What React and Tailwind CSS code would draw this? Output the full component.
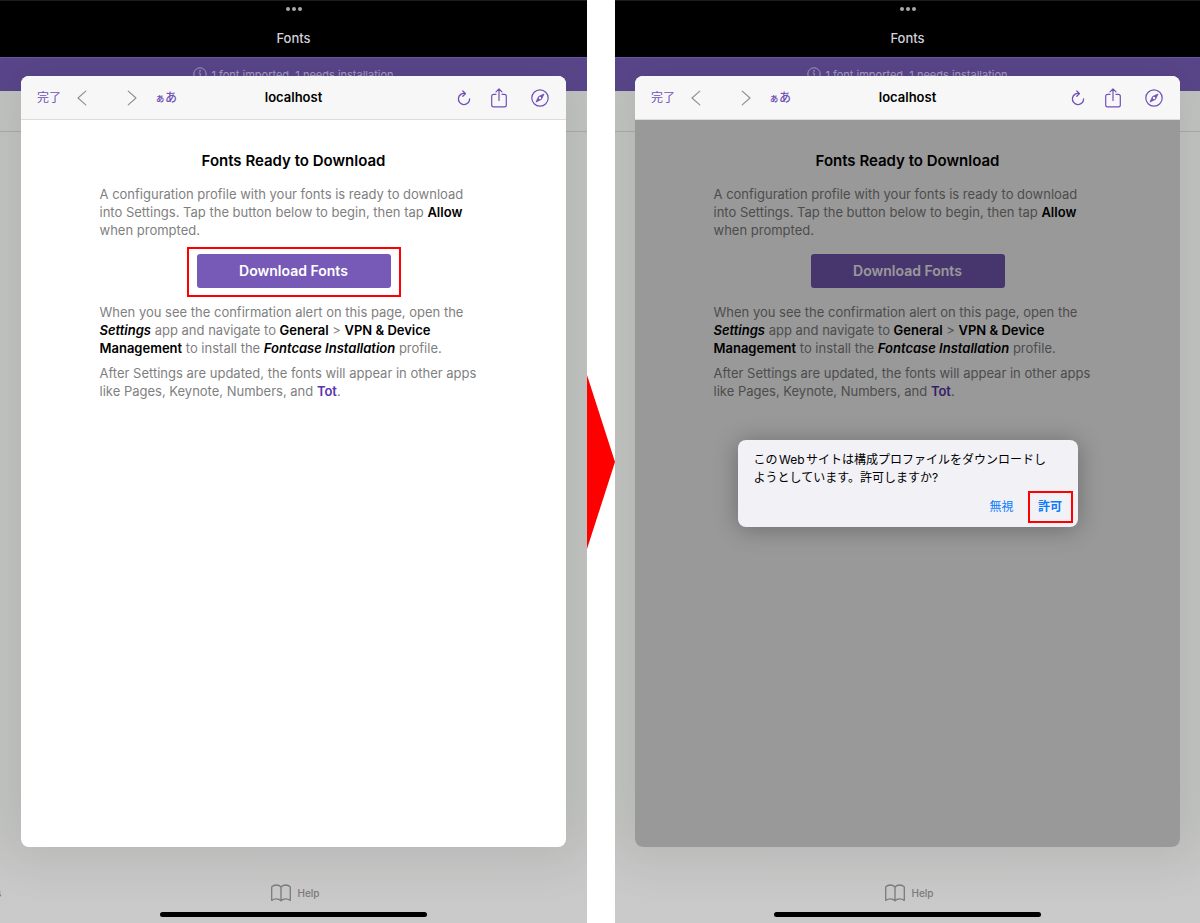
import React from 'react';
import clsx from 'clsx';

function ReloadIcon() {
  return (
    <svg className="w-[14px] h-4" viewBox="0 0 14 16" fill="none" stroke="currentColor" strokeWidth="1.3" strokeLinecap="round" strokeLinejoin="round">
      <path d="M8.2 3.5A5.6 5.6 0 1 0 12.6 9" />
      <path d="M5.8 1 8.4 3.6 5.8 6.2" />
    </svg>
  );
}

function ShareIcon() {
  return (
    <svg className="w-4 h-5" viewBox="0 0 16 20" fill="none" stroke="currentColor" strokeWidth="1.2" strokeLinecap="round" strokeLinejoin="round">
      <path d="M5 6.3H2.6A1.9 1.9 0 0 0 .7 8.2v8.7a1.9 1.9 0 0 0 1.9 1.9h10.8a1.9 1.9 0 0 0 1.9-1.9V8.2a1.9 1.9 0 0 0-1.9-1.9H11" />
      <path d="M8 12.4V1M5 3.9 8 .9l3 3" />
    </svg>
  );
}

function CompassIcon() {
  return (
    <svg className="size-[18px]" viewBox="0 0 18 18" fill="none" stroke="currentColor" strokeWidth="1.2" strokeLinejoin="round">
      <circle cx="9" cy="9" r="8.2" />
      <path d="M13 5 10.4 10.4 5 13 7.6 7.6Z" fill="currentColor" strokeWidth="0.8" />
      <circle cx="9" cy="9" r="1.2" fill="#f7f7f7" stroke="none" />
    </svg>
  );
}

function Chevron({ flip }) {
  return (
    <svg className="w-[10px] h-4" viewBox="0 0 10 16" fill="none" stroke="currentColor" strokeWidth="1.1" strokeLinecap="round" strokeLinejoin="round">
      <path d={flip ? 'M1.2 1.2 9 8l-7.8 6.8' : 'M8.8 1.2 1 8l7.8 6.8'} />
    </svg>
  );
}

function BookIcon() {
  return (
    <svg className="w-5 h-[18px]" viewBox="0 0 20 18" fill="none" stroke="currentColor" strokeWidth="1.3" strokeLinecap="round" strokeLinejoin="round">
      <path d="M10 3.2C9 1.6 7.4 1 5.6 1 3.6 1 1.9 1.6.7 2.9v13.5c1.3-1 2.9-1.5 4.7-1.5 1.9 0 3.5.6 4.6 2 1.1-1.4 2.7-2 4.6-2 1.8 0 3.4.5 4.7 1.500V2.900C18.100 1.600 16.400 1 14.400 1 12.600 1 11 1.600 10 3.200Zm0 0v13.700" />
    </svg>
  );
}

function Toolbar() {
  return (
    <div className="grid grid-cols-[1fr_auto_1fr] items-center h-11 shrink-0 px-4 bg-[#f7f7f7] border-b border-[#dcdcdc] text-[#7050b8]">
      <div className="flex items-center">
        <button className="text-xs">完了</button>
        <button aria-label="Back" className="ml-4 text-[#8e8e93]"><Chevron /></button>
        <button aria-label="Forward" className="ml-10 text-[#8e8e93]"><Chevron flip /></button>
        <button className="ml-[18px] flex items-baseline font-medium">
          <span className="text-[10px]">ぁ</span>
          <span className="text-xs">あ</span>
        </button>
      </div>
      <div className="text-[13px] font-semibold text-black">localhost</div>
      <div className="flex items-center justify-end pr-px">
        <button aria-label="Reload"><ReloadIcon /></button>
        <button aria-label="Share" className="ml-5"><ShareIcon /></button>
        <button aria-label="Open in Safari" className="ml-6"><CompassIcon /></button>
      </div>
    </div>
  );
}

function Strong({ children }) {
  return <strong className="font-semibold text-black">{children}</strong>;
}

function Instructions({ highlight }) {
  return (
    <div className="flex flex-col items-center pt-[31px] text-[13px] leading-[18px] text-[#7f7f7f]">
      <h1 className="text-[15px] leading-5 font-semibold text-black">Fonts Ready to Download</h1>
      <p className="w-[388px] mt-[14px]">
        A configuration profile with your fonts is ready to download into Settings. Tap the button below to begin, then tap <Strong>Allow</Strong> when prompted.
      </p>
      <div className="relative my-[15px]">
        <button className="block w-[194px] h-[34px] rounded-[3px] bg-[#775ab8] text-sm font-semibold text-white">
          Download Fonts
        </button>
        {highlight && <div className="absolute -inset-x-[10px] -top-[7px] -bottom-[9px] border-2 border-[#f00] pointer-events-none" />}
      </div>
      <p className="w-[388px]">
        When you see the confirmation alert on this page, open the <em><Strong>Settings</Strong></em> app and navigate to <Strong>General</Strong> &gt; <Strong>VPN &amp; Device Management</Strong> to install the <em><Strong>Fontcase Installation</Strong></em> profile.
      </p>
      <p className="w-[388px] mt-[7px]">
        After Settings are updated, the fonts will appear in other apps like Pages, Keynote, Numbers, and <a href="#tot" className="font-semibold text-[#5a35b0]">Tot</a>.
      </p>
    </div>
  );
}

function PermissionAlert() {
  return (
    <div className="absolute inset-0 flex items-center justify-center bg-black/40">
      <div role="alertdialog" className="w-[340px] rounded-lg bg-[#f1f1f6] pt-[11px] pl-4 pr-[5px] pb-1 shadow-[0_2px_24px_rgba(0,0,0,0.3)]">
        <p className="mr-4 text-xs leading-[18px] text-black [text-autospace:normal]">
          このWebサイトは構成プロファイルをダウンロードしようとしています。許可しますか?
        </p>
        <div className="flex items-center justify-end gap-[14px] mt-1 text-xs text-[#0a7aff]">
          <button>無視</button>
          <button className="w-[45px] h-8 border-2 border-[#f00] font-bold">許可</button>
        </div>
      </div>
    </div>
  );
}

function Screen({ sheetClass, highlight, alert, edgeLabel }) {
  return (
    <div className="relative flex flex-col overflow-hidden bg-linear-to-b from-[#c3c5c2] from-85% to-[#cacaca]">
      <div className="flex flex-col items-center h-[57px] bg-black border-t border-[#1c1c1c]">
        <div className="flex gap-[2px] mt-[6px]">
          <span className="size-1 rounded-full bg-[#a9a9a9]" />
          <span className="size-1 rounded-full bg-[#a9a9a9]" />
          <span className="size-1 rounded-full bg-[#a9a9a9]" />
        </div>
        <div className="mt-[17px] text-[13px] leading-5 font-medium text-[#d6d2de]">Fonts</div>
      </div>
      <div className="flex justify-center h-[34px] pt-[9px] bg-[#5a478c] border-t border-[#6c56a6] text-[11px] leading-4 text-[#a99fc0]">
        <div className="flex items-start gap-1">
          <svg className="size-[14px]" viewBox="0 0 14 14" fill="none" stroke="currentColor" strokeWidth="1">
            <circle cx="7" cy="7" r="6.2" />
            <path d="M5.8 6h1.4v4M5.6 10h3.2" />
            <circle cx="7" cy="3.9" r=".8" fill="currentColor" stroke="none" />
          </svg>
          1 font imported, 1 needs installation
        </div>
      </div>
      <div className="h-[41px] border-b border-[#aaaca9]" />

      <div className="flex items-center justify-center gap-[6px] h-5 mt-auto pl-1 text-[10px] font-medium text-[#7b7b7b]">
        <BookIcon />
        Help
      </div>
      {edgeLabel && <span className="absolute -left-1 bottom-[22px] text-[10px] text-[#6b6b6b]">{edgeLabel}</span>}
      <div className="self-center w-[267px] h-[5px] mt-[9px] mb-[6px] rounded-full bg-black" />

      <div className={clsx('absolute top-[76px] bottom-[76px] flex flex-col rounded-lg overflow-hidden bg-white shadow-[0_0_48px_16px_rgba(0,10,0,0.07)]', sheetClass)}>
        <Toolbar />
        <div className="relative flex-1">
          <Instructions highlight={highlight} />
          {alert && <PermissionAlert />}
        </div>
      </div>
    </div>
  );
}

export default function App() {
  return (
    <div className="grid grid-cols-[587fr_28px_585fr] min-h-screen bg-white font-[Inter,'Noto_Sans_CJK_JP',sans-serif]">
      <Screen sheetClass="inset-x-[21px]" highlight edgeLabel="s" />
      <svg className="w-7 h-[174px] self-center" viewBox="0 0 28 174">
        <path d="M0 0 28 87 0 174Z" fill="#f00" />
      </svg>
      <Screen sheetClass="inset-x-5" alert />
    </div>
  );
}
